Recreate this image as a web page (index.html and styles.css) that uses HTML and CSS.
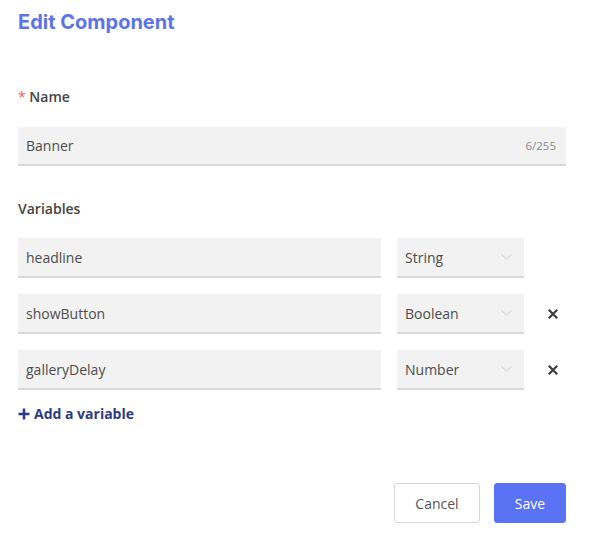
FILE: index.html
```html
<!DOCTYPE html>
<html>
<head>
<meta charset="utf-8">
<link rel="stylesheet" href="styles.css">
</head>
<body>
<div class="page">
  <h1 class="title">Edit Component</h1>

  <div class="label name-label"><span class="req">*</span> Name</div>
  <div class="field name-field">
    <span class="value">Banner</span>
    <span class="count">6/255</span>
  </div>

  <div class="label vars-label">Variables</div>
  <div class="vars">
    <div class="field"><span class="value">headline</span></div>
    <div class="field select"><span class="value">String</span><svg class="chev" width="11" height="6" viewBox="0 0 11 6"><path d="M0.5 0.5 L5.5 5 L10.5 0.5" fill="none" stroke="#c8c8c8" stroke-width="1"/></svg></div>
    <div class="remove"></div>

    <div class="field"><span class="value">showButton</span></div>
    <div class="field select"><span class="value">Boolean</span><svg class="chev" width="11" height="6" viewBox="0 0 11 6"><path d="M0.5 0.5 L5.5 5 L10.5 0.5" fill="none" stroke="#c8c8c8" stroke-width="1"/></svg></div>
    <div class="remove"><svg width="10" height="10" viewBox="0 0 10 10"><path d="M1.5 1.5 L8.5 8.5 M8.5 1.5 L1.5 8.5" stroke="#3d3d3d" stroke-width="2.2" stroke-linecap="square"/></svg></div>

    <div class="field"><span class="value">galleryDelay</span></div>
    <div class="field select"><span class="value">Number</span><svg class="chev" width="11" height="6" viewBox="0 0 11 6"><path d="M0.5 0.5 L5.5 5 L10.5 0.5" fill="none" stroke="#c8c8c8" stroke-width="1"/></svg></div>
    <div class="remove"><svg width="10" height="10" viewBox="0 0 10 10"><path d="M1.5 1.5 L8.5 8.5 M8.5 1.5 L1.5 8.5" stroke="#3d3d3d" stroke-width="2.2" stroke-linecap="square"/></svg></div>
  </div>

  <div class="add"><svg width="12" height="12" viewBox="0 0 12 12"><path d="M6 0.5 V11.5 M0.5 6 H11.5" stroke="#2e3a87" stroke-width="2.6"/></svg>Add a variable</div>

  <div class="actions">
    <button class="btn cancel">Cancel</button>
    <button class="btn save">Save</button>
  </div>
</div>
</body>
</html>
```

FILE: styles.css
```css
html, body {
  margin: 0;
  padding: 0;
  background: #ffffff;
}
.page {
  width: 548px;
  padding: 8px 0 0 18px;
  font-family: "Open Sans", "Liberation Sans", sans-serif;
  color: #4a4a4a;
  font-size: 14px;
}
.title {
  margin: 0;
  font-family: Inter, "Open Sans", sans-serif;
  font-size: 20px;
  font-weight: 700;
  line-height: 28px;
  letter-spacing: 0;
  color: #5b74e8;
}
.label {
  font-size: 14px;
  font-weight: 600;
  line-height: 20px;
  color: #444444;
}
.name-label { margin-top: 51px; }
.req { color: #f0587a; font-weight: 400; }
.field {
  box-sizing: border-box;
  height: 40px;
  background: #f2f2f2;
  border-bottom: 2px solid #d9d9d9;
  display: flex;
  align-items: center;
  padding: 0 8px;
  font-size: 14px;
  color: #4d4d4d;
}
.name-field {
  margin-top: 20px;
  justify-content: space-between;
  height: 39px;
}
.count {
  font-size: 11.5px;
  color: #8a8a8a;
  padding-right: 2px;
}
.vars-label { margin-top: 33px; }
.vars {
  margin-top: 19px;
  display: grid;
  grid-template-columns: 363px 127px 42px;
  column-gap: 16px;
  row-gap: 16px;
}
.select {
  justify-content: space-between;
  padding-right: 12px;
}
.remove {
  display: flex;
  align-items: center;
  margin-left: -16px;
  padding-left: 24px;
}
.add {
  margin-top: 14px;
  line-height: 20px;
  font-weight: 700;
  font-size: 14px;
  color: #2e3a87;
  display: flex;
  align-items: center;
  gap: 4px;
}
.actions {
  margin-top: 59px;
  display: flex;
  justify-content: flex-end;
  gap: 14px;
}
.btn {
  height: 40px;
  border-radius: 3px;
  font-family: "Open Sans", "Liberation Sans", sans-serif;
  font-size: 14px;
  cursor: pointer;
}
.cancel {
  width: 86px;
  background: #ffffff;
  border: 1px solid #d6d6d6;
  color: #555555;
}
.save {
  width: 72px;
  background: #5a73f5;
  border: 1px solid #5a73f5;
  color: #ffffff;
}
```
